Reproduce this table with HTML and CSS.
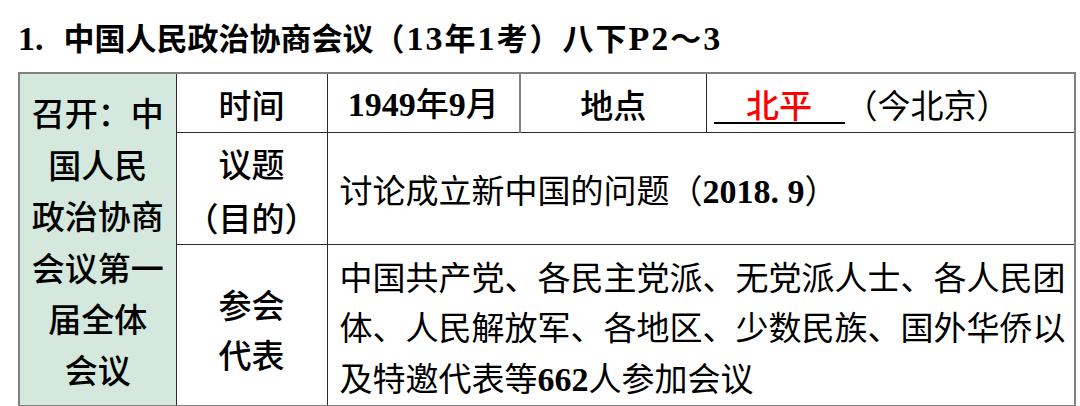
FILE: index.html
```html
<!DOCTYPE html>
<html lang="zh-CN">
<head>
<meta charset="utf-8">
<title>中国人民政治协商会议</title>
<link rel="stylesheet" href="styles.css">
</head>
<body>
<h1 class="title"><span class="num">1.</span><span class="gap"></span>中国人民政治协商会议<span class="tail">（<span class="num">13</span>年<span class="num">1</span>考）八下<span class="num">P2</span>～<span class="num">3</span></span></h1>
<table class="grid">
  <colgroup>
    <col class="c1"><col class="c2"><col class="c3"><col class="c4"><col class="c5">
  </colgroup>
  <tr class="r1">
    <td class="side" rowspan="3">
      <div class="side-text">召开：中<br>国人民<br>政治协商<br>会议第一<br>届全体<br>会议</div>
    </td>
    <td class="label">时间</td>
    <td class="date"><span class="num">1949</span>年<span class="num">9</span>月</td>
    <td class="label place-label">地点</td>
    <td class="place"><span class="blank">北平</span>（今北京）</td>
  </tr>
  <tr class="r2">
    <td class="label tall">议题<br>（目的）</td>
    <td class="content" colspan="3">讨论成立新中国的问题（<span class="num b">2018. 9</span>）</td>
  </tr>
  <tr class="r3">
    <td class="label mid">参会<br>代表</td>
    <td class="content" colspan="3">
      <div class="line">中国共产党、各民主党派、无党派人士、各人民团</div>
      <div class="line">体、人民解放军、各地区、少数民族、国外华侨以</div>
      <div class="line">及特邀代表等<span class="num b">662</span>人参加会议</div>
    </td>
  </tr>
</table>
</body>
</html>
```
FILE: styles.css
```css
html, body {
  margin: 0;
  padding: 0;
  background: #ffffff;
}
body {
  width: 1080px;
  height: 406px;
  overflow: hidden;
  font-family: "Noto Sans CJK SC", "Noto Sans", sans-serif;
  color: #000000;
}
.title {
  margin: 17px 0 15px 18px;
  font-size: 31px;
  line-height: 40px;
  height: 40px;
  font-weight: 700;
  white-space: nowrap;
}
.num {
  font-family: "Liberation Serif", "Noto Sans CJK SC", serif;
  font-weight: 700;
}
.title .num {
  font-size: 34px;
}
.title .tail {
  letter-spacing: 2px;
}
.gap {
  display: inline-block;
  width: 20px;
}
.grid {
  margin-left: 18px;
  border-collapse: collapse;
  table-layout: fixed;
  width: 1056px;
  border: 2px solid #808080;
}
.c1 { width: 157px; }
.c2 { width: 151px; }
.c3 { width: 193px; }
.c4 { width: 186px; }
.c5 { width: 369px; }
.grid td {
  border: 1px solid #2b2b2b;
  padding: 0;
  vertical-align: middle;
  font-size: 33px;
  overflow: hidden;
}
.grid tr.r1 td { border-top: 2px solid #808080; }
.grid td.place, .grid td.content { border-right: 2px solid #808080; }
.grid tr.r3 td { border-bottom: 2px solid #808080; }
.grid td.place-label { border-left: 2px solid #808080; }
.r1 { height: 59px; }
.r2 { height: 111px; }
.r3 { height: 160px; }
.grid td.side {
  background: #d5e8dd;
  text-align: center;
  border-left: 2px solid #808080;
  border-bottom: 2px solid #808080;
}
.side-text {
  line-height: 51.4px;
  font-weight: 500;
  padding-top: 4px;
}
.grid td.label {
  text-align: center;
  font-weight: 500;
  line-height: 40px;
  padding-top: 2px;
}
.grid td.label.tall {
  line-height: 54px;
  padding-top: 3px;
}
.grid td.label.mid {
  line-height: 50px;
  padding-top: 9px;
}
.grid td.date {
  text-align: center;
  font-weight: 500;
  line-height: 40px;
  padding-top: 2px;
}
.date .num { font-size: 34px; }
.grid td.place {
  padding-left: 7px;
  line-height: 40px;
  padding-top: 2px;
  white-space: nowrap;
}
.blank {
  display: inline-block;
  width: 131px;
  text-align: center;
  color: #ff0000;
  font-weight: 500;
  border-bottom: 2px solid #000000;
  line-height: 36px;
}
.grid td.content {
  padding: 0 6px 0 12px;
  line-height: 51px;
  white-space: nowrap;
}
.content .b { font-size: 34px; }
.grid tr.r2 td.content { padding-top: 4px; }
.grid tr.r3 td.content { padding-top: 6px; line-height: 50.5px; }
.line { white-space: nowrap; }
```
